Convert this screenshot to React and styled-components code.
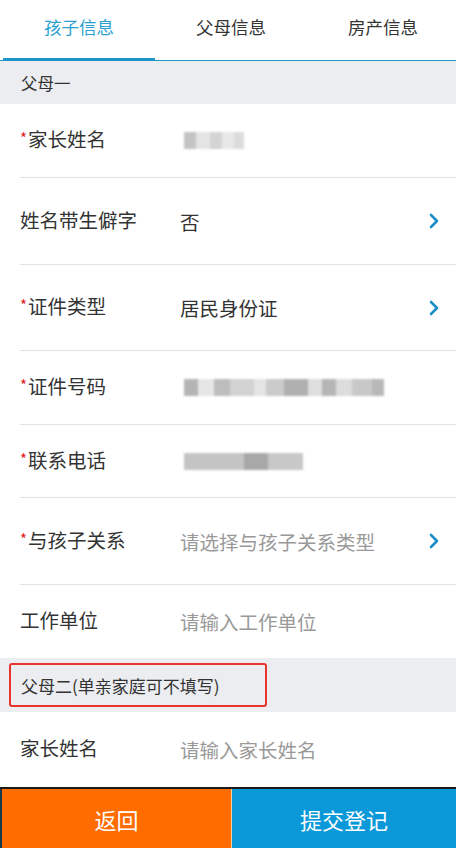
import React from 'react'
import styled, { createGlobalStyle } from 'styled-components'

const GlobalStyle = createGlobalStyle`
  html, body { margin: 0; padding: 0; background: #fff; }
  body { font-family: "Microsoft YaHei", "Noto Sans CJK SC", "Noto Sans", sans-serif; }
  * { box-sizing: border-box; }
`

const Page = styled.div`
  width: 456px;
  height: 848px;
  display: flex;
  flex-direction: column;
  overflow: hidden;
  background: #fff;
`

const Tabs = styled.div`
  display: grid;
  grid-template-columns: repeat(3, 152px);
  padding-left: 3px;
  height: 61px;
  border-bottom: 1px solid #1d95c9;
  flex-shrink: 0;
`

const Tab = styled.div`
  display: flex;
  align-items: center;
  justify-content: center;
  padding-bottom: 6px;
  font-size: 17.5px;
  color: ${p => (p.active ? '#2a9fd0' : '#333')};
  border-bottom: 3px solid ${p => (p.active ? '#1d95c9' : 'transparent')};
  margin-bottom: -1px;
`

const Content = styled.div`
  flex: 1;
  overflow: hidden;
`

const Section = styled.div`
  height: ${p => p.h}px;
  background: #ebedf0;
  display: flex;
  align-items: center;
  padding-left: ${p => (p.boxed ? '9px' : '21px')};
  font-size: 16.5px;
  color: #333;
`

const Highlight = styled.div`
  border: 2px solid #e8332e;
  border-radius: 3px;
  width: 258px;
  height: 44px;
  display: flex;
  align-items: center;
  padding-left: 10px;
  font-size: 17px;
`

const Row = styled.div`
  height: ${p => p.h}px;
  margin-left: 20px;
  display: flex;
  align-items: center;
  border-bottom: ${p => (p.last ? 'none' : '1px solid #e3e3e3')};
  padding-right: 16px;
`

const Label = styled.div`
  width: 160px;
  font-size: 19.5px;
  color: #333;
  margin-top: -4px;
`

const Star = styled.span`
  color: #e02020;
  font-size: 15px;
  vertical-align: 3px;
  margin-right: 1px;
`

const Value = styled.div`
  flex: 1;
  font-size: 19.5px;
  color: ${p => (p.placeholder ? '#999' : '#333')};
`

const Mosaic = styled.div`
  display: flex;
  align-items: center;
  height: 20px;
  padding-left: 4px;
  filter: blur(1.2px);
`

const Tile = styled.span`
  display: inline-block;
  height: 17px;
  background: ${p => p.c};
`

const Chevron = styled.svg`
  width: 12px;
  height: 18px;
  flex-shrink: 0;
`

const Footer = styled.div`
  display: grid;
  grid-template-columns: 231px 1fr;
  height: 61px;
  border-top: 2px solid #1a1a1a;
  flex-shrink: 0;
`

const FooterButton = styled.div`
  display: flex;
  align-items: center;
  justify-content: center;
  background: ${p => p.bg};
  color: #fff;
  font-size: 22px;
  border-left: ${p => (p.first ? '2px solid #1a3a4a' : '1px solid #f5d4a0')};
`

const Arrow = () => (
  <Chevron viewBox="0 0 12 18">
    <polyline points="3,3 9,9 3,15" fill="none" stroke="#1a8fc7" strokeWidth="2.6" strokeLinecap="round" strokeLinejoin="round" />
  </Chevron>
)

const Blur = ({ tiles }) => (
  <Mosaic>
    {tiles.map((t, i) => (
      <Tile key={i} c={t[1]} style={{ width: t[0] }} />
    ))}
  </Mosaic>
)

const nameTiles = [[12, '#c4c4c4'], [14, '#e4e4e4'], [12, '#d4d4d4'], [12, '#e8e8e8'], [10, '#dcdcdc']]
const idTiles = [[14, '#b4b4b4'], [16, '#e6e6e6'], [16, '#bdbdbd'], [24, '#d2d2d2'], [12, '#e4e4e4'], [18, '#cbcbcb'], [24, '#b0b0b0'], [14, '#dedede'], [14, '#b5b5b5'], [16, '#dcdcdc'], [20, '#c8c8c8'], [12, '#b8b8b8']]
const phoneTiles = [[60, '#c4c4c4'], [24, '#a8a8a8'], [35, '#c8c8c8']]

const App = () => (
  <Page>
    <GlobalStyle />
    <Tabs>
      <Tab active>孩子信息</Tab>
      <Tab>父母信息</Tab>
      <Tab>房产信息</Tab>
    </Tabs>
    <Content>
      <Section h={43}>父母一</Section>
      <Row h={74}>
        <Label><Star>*</Star>家长姓名</Label>
        <Value><Blur tiles={nameTiles} /></Value>
      </Row>
      <Row h={87}>
        <Label>姓名带生僻字</Label>
        <Value>否</Value>
        <Arrow />
      </Row>
      <Row h={86}>
        <Label><Star>*</Star>证件类型</Label>
        <Value>居民身份证</Value>
        <Arrow />
      </Row>
      <Row h={74}>
        <Label><Star>*</Star>证件号码</Label>
        <Value><Blur tiles={idTiles} /></Value>
      </Row>
      <Row h={73}>
        <Label><Star>*</Star>联系电话</Label>
        <Value><Blur tiles={phoneTiles} /></Value>
      </Row>
      <Row h={87}>
        <Label><Star>*</Star>与孩子关系</Label>
        <Value placeholder>请选择与孩子关系类型</Value>
        <Arrow />
      </Row>
      <Row h={73} last>
        <Label>工作单位</Label>
        <Value placeholder>请输入工作单位</Value>
      </Row>
      <Section h={54} boxed>
        <Highlight>父母二(单亲家庭可不填写)</Highlight>
      </Section>
      <Row h={75} last>
        <Label>家长姓名</Label>
        <Value placeholder>请输入家长姓名</Value>
      </Row>
    </Content>
    <Footer>
      <FooterButton first bg="#ff6c00">返回</FooterButton>
      <FooterButton bg="#0a98d9">提交登记</FooterButton>
    </Footer>
  </Page>
)

export default App
